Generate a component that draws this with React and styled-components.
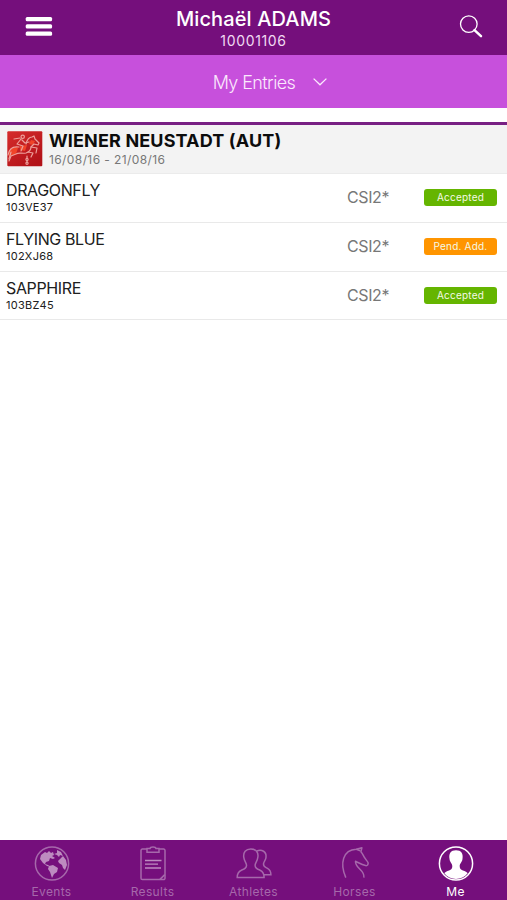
import React, { useState } from 'react';
import styled, { createGlobalStyle } from 'styled-components';

const GlobalStyle = createGlobalStyle`
  body {
    margin: 0;
    background: #fff;
    font-family: Inter, Roboto, sans-serif;
  }
  * {
    box-sizing: border-box;
  }
  svg {
    display: block;
  }
`;

const Screen = styled.div`
  width: 100%;
  height: 100vh;
  display: flex;
  flex-direction: column;
  overflow: hidden;
`;

const Header = styled.header`
  height: 55px;
  flex-shrink: 0;
  display: flex;
  align-items: center;
  justify-content: space-between;
  padding: 0 24px 0 25px;
  background: #750f7c;
  color: #fff;
`;

const IconButton = styled.button`
  border: 0;
  padding: 0 0 1px;
  background: none;
  color: inherit;
  cursor: pointer;
`;

const Heading = styled.div`
  padding: 1px 5px 0 0;
  text-align: center;
`;

const UserName = styled.div`
  font-size: 20px;
  line-height: 24px;
  font-weight: 500;
  letter-spacing: 0.12px;
`;

const UserId = styled.div`
  font-size: 14px;
  line-height: 19px;
  letter-spacing: 0.65px;
  color: #f0d9f2;
`;

const Dropdown = styled.button`
  height: 53px;
  flex-shrink: 0;
  display: flex;
  align-items: center;
  justify-content: center;
  gap: 18px;
  border: 0;
  padding: 1px 0 0 33px;
  background: #c750dc;
  color: #fbe9fd;
  font-family: Inter, sans-serif;
  font-size: 18px;
  font-weight: 300;
  letter-spacing: -0.6px;
`;

const List = styled.main`
  flex: 1;
  margin-top: 14px;
`;

const EventBar = styled.div`
  height: 52px;
  display: flex;
  align-items: flex-start;
  gap: 6px;
  padding: 5px 7px 0;
  border-top: 3px solid #782083;
  border-bottom: 1px solid #ebebeb;
  background: #f3f3f3;
`;

const EventTitle = styled.div`
  color: #0c0c0c;
  font-size: 18px;
  line-height: 21px;
  font-weight: 700;
  letter-spacing: 0.14px;
`;

const EventDate = styled.div`
  color: #777;
  font-size: 12px;
  line-height: 17px;
  letter-spacing: 0.4px;
`;

const Row = styled.div`
  height: 48.75px;
  display: flex;
  align-items: center;
  padding: 0 10px 0 6px;
  border-bottom: 1px solid #e9e9e9;
`;

const Horse = styled.div`
  flex: 1;
  padding-top: 0.5px;
  color: #202020;
`;

const HorseName = styled.div`
  font-size: 16px;
  line-height: 19px;
  letter-spacing: -0.37px;
`;

const HorseId = styled.div`
  font-size: 11px;
  line-height: 15px;
  letter-spacing: 0.25px;
`;

const Category = styled.div`
  width: 77px;
  padding-bottom: 1px;
  color: #777;
  font-size: 16px;
  letter-spacing: -0.4px;
`;

const Badge = styled.div`
  width: 73px;
  height: 17px;
  border-radius: 3px;
  background: ${props => (props.$pending ? '#ff9500' : '#65b500')};
  color: #f5f9e6;
  font-size: 10px;
  line-height: 17px;
  letter-spacing: 0.2px;
  text-align: center;
`;

const TabBar = styled.nav`
  height: 60px;
  flex-shrink: 0;
  display: flex;
  align-items: flex-start;
  padding: 0 1px;
  background: #750f7c;
`;

const Tab = styled.button`
  flex: 1;
  display: flex;
  flex-direction: column;
  align-items: center;
  gap: 2px;
  border: 0;
  padding: 6px 0 0;
  background: none;
  color: ${props => (props.$active ? '#fff' : '#a668ab')};
  font-family: Inter, sans-serif;
  font-size: 12px;
  line-height: 18px;
  letter-spacing: 0.35px;
`;

const MenuIcon = () => (
  <svg width="28" height="20" viewBox="0 0 28 20" fill="currentColor">
    <rect x="0.7" y="0" width="26.4" height="4.2" rx="1.5" />
    <rect x="0.7" y="7.3" width="26.4" height="4.2" rx="1.5" />
    <rect x="0.7" y="14.6" width="26.4" height="4.2" rx="1.5" />
  </svg>
);

const SearchIcon = () => (
  <svg width="24" height="24" viewBox="0 0 24 24" fill="none" stroke="currentColor">
    <circle cx="9.8" cy="9.1" r="8.3" strokeWidth="1.3" />
    <path d="M15.5 15.1L22 21.2" strokeWidth="2.5" strokeLinecap="round" />
  </svg>
);

const ChevronIcon = () => (
  <svg width="14" height="8" viewBox="0 0 14 8" fill="none" stroke="currentColor" strokeWidth="1.3">
    <path d="M0.6 0.6L7 6.8l6.4-6.2" />
  </svg>
);

const EventLogo = () => (
  <svg width="36" height="37" viewBox="0 -1 36 37">
    <defs>
      <linearGradient id="logo" x1="0" y1="0" x2="0.7" y2="1">
        <stop offset="0" stopColor="#d62c2c" />
        <stop offset="1" stopColor="#b21218" />
      </linearGradient>
    </defs>
    <rect x="0.3" y="0.3" width="35" height="35" rx="1" fill="url(#logo)" />
    <path d="M2 20c2-4 6-5 9-3l-2 6-7 3zM13 15l7-1-2 6-5-1zM24 9l4 1-2 4-4-1z" fill="#f04428" />
    <g fill="none" stroke="#eda09b" strokeWidth="1.2" strokeLinecap="round" strokeLinejoin="round">
      <path d="M1 24c1-6 5-9 11-8M19 13c1-4 3-7 6-7l2-1 1 3 4 4-1 2-4-1-3 3c0 3-2 5-5 6-4 1-7-1-10 1l-5 2-2 5" />
      <path d="M24 16l6 1-1 5M21 21l5 1-2 4M4 21l-2 7" />
      <circle cx="15.7" cy="5.8" r="1.7" />
      <path d="M14 8l-4 5 6 2-2 5M15 9l3 3 4-1M7 8l6-1" />
      <path d="M20 25v2M20 30v1" />
      <circle cx="20" cy="28.5" r="1.1" />
      <circle cx="20" cy="32.3" r="1.1" />
    </g>
  </svg>
);

const GlobeIcon = () => (
  <svg width="36" height="35" viewBox="0 0 36 35">
    <circle cx="18" cy="17.5" r="16.6" fill="none" stroke="currentColor" strokeWidth="1.5" />
    <path
      fill="#bd8bc0"
      d="M7 9l4-3 2 1 2-2 2 2 2-1 1 3-2 1 3 2-2 1-3-1-1 3-3 1-1 2 3 1 3 2-4-1-4-3-3-4zM23 4l4 2 2 4-3-1-1 2-2-2-3-1 3-1zM26 13l3-3 3 4 1 5-2 5-2-2-1-3-3-2-1-2zM15 20l4-1 5 3-1 4-3 2-2 4-2-6-2-3z"
    />
  </svg>
);

const ClipboardIcon = () => (
  <svg width="28" height="35" viewBox="0 0 28 35" fill="none" stroke="currentColor" strokeWidth="1.5">
    <path d="M8 3H3.4A1.4 1.4 0 002 4.4v27.8a1.4 1.4 0 001.4 1.4h21.2a1.4 1.4 0 001.4-1.4V4.4A1.4 1.4 0 0024.6 3H20" />
    <path d="M21 33.4l4.8-4.8" />
    <path d="M8 6.3V2.6h3c.3-2.2 5.7-2.2 6 0h3v3.7z" />
    <path d="M6 14.5h16.5M6 18.2h13M6 22h16" stroke="#bd8bc0" strokeWidth="1.3" />
  </svg>
);

const PeopleIcon = () => (
  <svg width="36" height="35" viewBox="0 0 36 35" fill="none" stroke="currentColor" strokeWidth="1.5">
    <path d="M14.8 3c5 0 8 3.2 7 8.4-.3 3.5-2.5 5-2.7 7.6-.2 3.3 2 4 5 5.2 3 1.4 4 3.5 4 7.3H1.2c0-4 1.2-6 4.2-7.3 3-1.2 5.4-2 5.1-5.2-.2-2.6-2.3-4-2.7-7.6C7 6.2 9.8 3 14.8 3z" />
    <path d="M20.8 5c5-2.2 9.9.8 9.2 6.2 0 2.5-2.3 4.5-2.5 6.7-.2 3 1.3 3.2 4 4.5 2.5 1.3 3.4 3.2 3.4 6.3h-7" />
  </svg>
);

const HorseIcon = () => (
  <svg width="36" height="35" viewBox="0 0 36 35" fill="none" stroke="currentColor" strokeWidth="1.5" strokeLinejoin="round">
    <path d="M8.8 31.6C2.5 17 6 3.8 19.3 3.2l5.6-1.4-1 4c1.8 2 2.3 3.6 3.7 5.9 1 1.8 2.6 3.2 3.4 4.8.5 1.7-.5 3.5-2.4 3.1-4.3-1.1-6.1-2.5-10.1-4.4-.5 7.5 9.5 8.4 8.4 16.4" />
    <path d="M19.3 3.2l4 1.6" />
  </svg>
);

const MeIcon = () => (
  <svg width="36" height="35" viewBox="0 0 36 35">
    <circle cx="18" cy="17.5" r="16.6" fill="none" stroke="currentColor" strokeWidth="1.5" />
    <path
      fill="currentColor"
      d="M18 4.2c5.2 0 7.4 3.4 6.5 8.5-.2 3.5-2.8 4.5-2.8 7.5 0 2.4 1 3.3 3.2 4.2 2.3.8 4.1 1.6 4.8 2.8-3 3.6-7 5.7-11.7 5.7S9.2 30.8 6.3 27.2c.7-1.2 2.5-2 4.8-2.8 2.2-.9 3.2-1.8 3.2-4.2 0-3-2.6-4-2.8-7.5-.9-5.1 1.3-8.5 6.5-8.5z"
    />
  </svg>
);

const entries = [
  { name: 'DRAGONFLY', id: '103VE37', category: 'CSI2*', status: 'Accepted' },
  { name: 'FLYING BLUE', id: '102XJ68', category: 'CSI2*', status: 'Pend. Add.' },
  { name: 'SAPPHIRE', id: '103BZ45', category: 'CSI2*', status: 'Accepted' },
];

const tabs = [
  { label: 'Events', Icon: GlobeIcon },
  { label: 'Results', Icon: ClipboardIcon },
  { label: 'Athletes', Icon: PeopleIcon },
  { label: 'Horses', Icon: HorseIcon },
  { label: 'Me', Icon: MeIcon },
];

const App = () => {
  const [active, setActive] = useState('Me');

  return (
    <Screen>
      <GlobalStyle />
      <Header>
        <IconButton aria-label="Menu"><MenuIcon /></IconButton>
        <Heading>
          <UserName>Michaël ADAMS</UserName>
          <UserId>10001106</UserId>
        </Heading>
        <IconButton aria-label="Search"><SearchIcon /></IconButton>
      </Header>
      <Dropdown>
        My Entries
        <ChevronIcon />
      </Dropdown>
      <List>
        <EventBar>
          <EventLogo />
          <div>
            <EventTitle>WIENER NEUSTADT (AUT)</EventTitle>
            <EventDate>16/08/16 - 21/08/16</EventDate>
          </div>
        </EventBar>
        {entries.map(entry => (
          <Row key={entry.id}>
            <Horse>
              <HorseName>{entry.name}</HorseName>
              <HorseId>{entry.id}</HorseId>
            </Horse>
            <Category>{entry.category}</Category>
            <Badge $pending={entry.status !== 'Accepted'}>{entry.status}</Badge>
          </Row>
        ))}
      </List>
      <TabBar>
        {tabs.map(({ label, Icon }) => (
          <Tab key={label} $active={label === active} onClick={() => setActive(label)}>
            <Icon />
            {label}
          </Tab>
        ))}
      </TabBar>
    </Screen>
  );
}

export default App;
